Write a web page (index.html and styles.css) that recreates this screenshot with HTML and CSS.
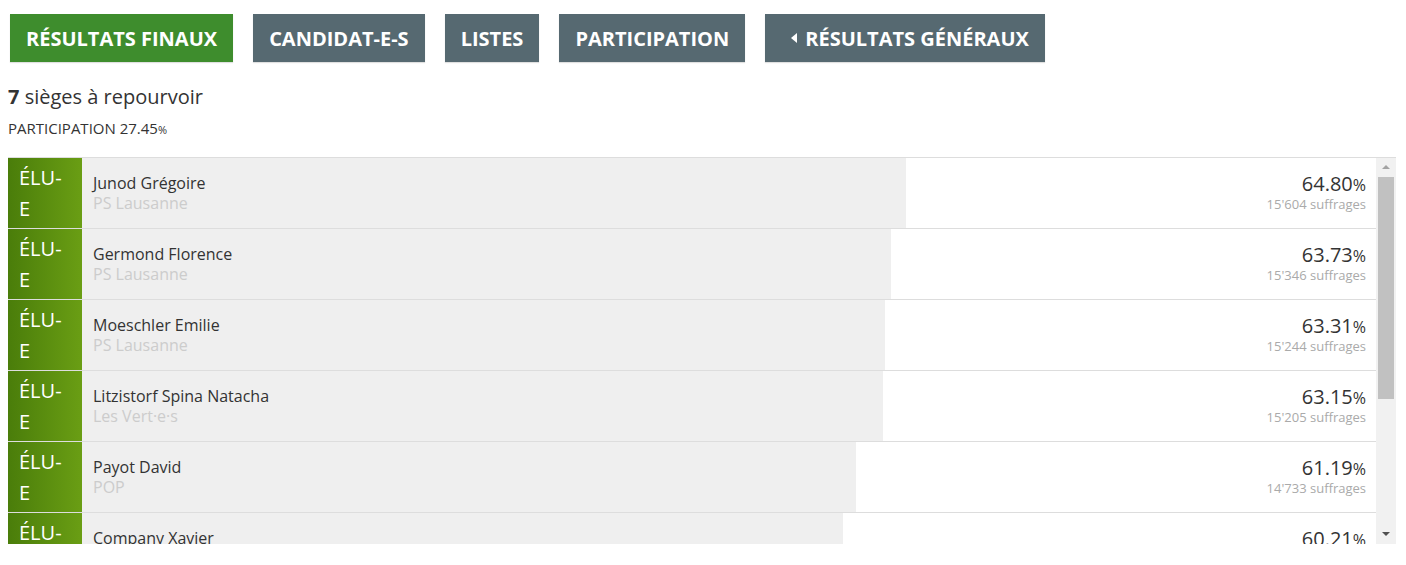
FILE: index.html
```html
<!DOCTYPE html>
<html lang="fr">
<head>
<meta charset="utf-8">
<title>Résultats finaux</title>
<link rel="stylesheet" href="styles.css">
</head>
<body>
<nav class="tabs">
  <a class="tab tab-active" href="#">Résultats finaux</a>
  <a class="tab" href="#">Candidat-e-s</a>
  <a class="tab" href="#">Listes</a>
  <a class="tab" href="#">Participation</a>
  <a class="tab tab-back" href="#"><span class="caret"></span>Résultats généraux</a>
</nav>
<p class="seats"><strong>7</strong> sièges à repourvoir</p>
<p class="turnout">PARTICIPATION 27.45<small>%</small></p>
<div class="results">
  <div class="list">
    <div class="row">
      <div class="status">ÉLU-E</div>
      <div class="bar" style="--w:824px">
        <div class="who"><div class="name">Junod Grégoire</div><div class="party">PS Lausanne</div></div>
        <div class="score"><div class="pct">64.80<small>%</small></div><div class="votes">15'604 suffrages</div></div>
      </div>
    </div>
    <div class="row">
      <div class="status">ÉLU-E</div>
      <div class="bar" style="--w:809px">
        <div class="who"><div class="name">Germond Florence</div><div class="party">PS Lausanne</div></div>
        <div class="score"><div class="pct">63.73<small>%</small></div><div class="votes">15'346 suffrages</div></div>
      </div>
    </div>
    <div class="row">
      <div class="status">ÉLU-E</div>
      <div class="bar" style="--w:803px">
        <div class="who"><div class="name">Moeschler Emilie</div><div class="party">PS Lausanne</div></div>
        <div class="score"><div class="pct">63.31<small>%</small></div><div class="votes">15'244 suffrages</div></div>
      </div>
    </div>
    <div class="row">
      <div class="status">ÉLU-E</div>
      <div class="bar" style="--w:801px">
        <div class="who"><div class="name">Litzistorf Spina Natacha</div><div class="party">Les Vert·e·s</div></div>
        <div class="score"><div class="pct">63.15<small>%</small></div><div class="votes">15'205 suffrages</div></div>
      </div>
    </div>
    <div class="row">
      <div class="status">ÉLU-E</div>
      <div class="bar" style="--w:774px">
        <div class="who"><div class="name">Payot David</div><div class="party">POP</div></div>
        <div class="score"><div class="pct">61.19<small>%</small></div><div class="votes">14'733 suffrages</div></div>
      </div>
    </div>
    <div class="row">
      <div class="status">ÉLU-E</div>
      <div class="bar" style="--w:761px">
        <div class="who"><div class="name">Company Xavier</div><div class="party">Les Vert·e·s</div></div>
        <div class="score"><div class="pct">60.21<small>%</small></div><div class="votes">14'497 suffrages</div></div>
      </div>
    </div>
  </div>
  <div class="scrollbar" aria-hidden="true">
    <div class="sb-btn"><span class="arrow-up"></span></div>
    <div class="sb-thumb"></div>
    <div class="sb-rest"></div>
    <div class="sb-btn"><span class="arrow-down"></span></div>
  </div>
</div>
</body>
</html>
```

FILE: styles.css
```css
html, body {
  margin: 0;
  padding: 0;
  background: #fff;
}
body {
  margin: 8px;
  font-family: "Open Sans", "Liberation Sans", sans-serif;
  color: #333;
}
.tabs {
  display: flex;
  gap: 20px;
  padding: 6px 2px 0;
}
.tab {
  display: flex;
  align-items: center;
  height: 48px;
  box-sizing: border-box;
  padding: 0 16px;
  background: #566971;
  color: #fff;
  font-size: 20px;
  font-weight: 700;
  text-transform: uppercase;
  text-decoration: none;
  box-shadow: 0 1px 1px rgba(0,0,0,0.12);
}
.tab-active {
  background: #3e8d2d;
}
.tab-back {
  padding-left: 26px;
}
.caret {
  width: 0;
  height: 0;
  border-top: 5px solid transparent;
  border-bottom: 5px solid transparent;
  border-right: 6px solid #fff;
  margin-right: 8px;
}
.seats {
  margin: 21px 0 0;
  font-size: 20px;
  line-height: 27px;
}
.seats strong {
  font-weight: 700;
}
.turnout {
  margin: 8px 0 0;
  font-size: 15px;
  line-height: 20px;
}
.turnout small {
  font-size: 11px;
}
.results {
  margin: 17px 2px 0 0;
  height: 386px;
  display: flex;
  border-top: 1px solid #ddd;
  overflow: hidden;
}
.list {
  flex: 1;
  min-width: 0;
  overflow: hidden;
}
.row {
  display: grid;
  grid-template-columns: 74px 1fr;
  height: 71px;
  border-bottom: 1px solid #ddd;
  box-sizing: border-box;
}
.status {
  background: linear-gradient(to right, #4a7d0a, #6a9e14);
  color: #fff;
  font-size: 20px;
  line-height: 31px;
  padding: 0 14px 0 11px;
  display: flex;
  align-items: center;
}
.bar {
  display: flex;
  align-items: center;
  justify-content: space-between;
  padding: 0 10px 0 11px;
  background: linear-gradient(to right, #efefef var(--w), #fff var(--w));
}
.name {
  font-size: 16px;
  line-height: 20px;
  color: #333;
}
.party {
  font-size: 16px;
  line-height: 20px;
  color: #ccc;
}
.score {
  text-align: right;
}
.pct {
  font-size: 20px;
  line-height: 22px;
  color: #333;
}
.pct small {
  font-size: 16px;
}
.votes {
  font-size: 13px;
  line-height: 17px;
  color: #aaa;
}
.scrollbar {
  width: 20px;
  flex: none;
  background: #f1f1f1;
  display: flex;
  flex-direction: column;
  align-items: center;
  margin-top: -1px;
}
.sb-btn {
  height: 20px;
  width: 100%;
  display: flex;
  align-items: center;
  justify-content: center;
  flex: none;
}
.arrow-up,
.arrow-down {
  width: 0;
  height: 0;
  border-left: 4px solid transparent;
  border-right: 4px solid transparent;
}
.arrow-up {
  border-bottom: 4px solid #a3a3a3;
}
.arrow-down {
  border-top: 4px solid #505050;
}
.sb-thumb {
  width: 16px;
  height: 222px;
  background: #c1c1c1;
  flex: none;
}
.sb-rest {
  flex: 1;
}
```
